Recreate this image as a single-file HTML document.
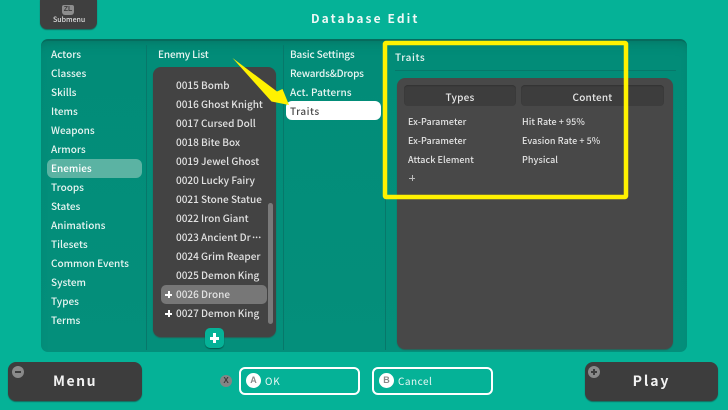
<!DOCTYPE html>
<html><head><meta charset="utf-8">
<style>
html,body{margin:0;padding:0}
body{width:728px;height:410px;overflow:hidden;position:relative;background:#05b297;font-family:"Liberation Sans","Noto Sans CJK JP",sans-serif;color:#fff}
*{box-sizing:border-box}
.a{position:absolute}
.t{position:absolute;font-family:"Noto Sans CJK JP","Liberation Sans",sans-serif;font-size:10px;line-height:14px;letter-spacing:0;white-space:nowrap;color:#e9f5f2;font-weight:500;filter:blur(.25px)}
.d{color:#e2e2e2}
.l{left:176px}
.s{font-size:9px;letter-spacing:.05px}
.dk{background:#434343;box-shadow:0 1px 1px #2c5e55}
.hd{position:absolute;top:85px;height:21px;background:#3d3d3d;border-radius:4px;box-shadow:inset 0 1px 1px #333;text-align:center;font-family:"Noto Sans CJK JP",sans-serif;font-size:10px;line-height:23px;letter-spacing:.2px;color:#e8e8e8;font-weight:500}
.btn{position:absolute;background:#3d3d3d;border-radius:8px;box-shadow:0 1px 1px #16695c;text-align:center;font-family:"Noto Sans CJK JP",sans-serif;font-weight:700;font-size:14px;letter-spacing:1.9px;line-height:38px;color:#f2f2f2}
.ob{position:absolute;top:367px;height:28px;border:2px solid #fff;border-radius:6px}
.c{position:absolute;border-radius:50%;text-align:center;font-family:"Liberation Sans",sans-serif;font-weight:700}
</style></head><body>

<!-- Submenu -->
<div class="a" style="left:40px;top:-6px;width:57px;height:35px;background:#3f3f3f;border-radius:7px;box-shadow:0 1px 1px #16695c"></div>
<div class="a" style="left:62px;top:5px;width:12px;height:10px;background:#8d8d8d;border-radius:2px 2px 3px 3px;font:700 7px/10px 'Liberation Sans',sans-serif;color:#3f3f3f;text-align:center">ZL</div>
<div class="t" style="left:53px;top:14px;font-size:7px;line-height:13px;letter-spacing:0;color:#ddd">Submenu</div>

<div class="t" style="left:311px;top:10px;font-size:12px;line-height:18px;letter-spacing:2.1px;font-weight:700;color:#eef8f6">Database Edit</div>

<!-- Main panel -->
<div class="a" style="left:41px;top:39px;width:646px;height:313px;border-radius:7px;background:linear-gradient(#028c78,#048f7b);border-top:2px solid #066b5d;box-shadow:inset 0 8px 12px -8px #06705f"></div>
<div class="a" style="left:146px;top:45px;width:1px;height:305px;background:#07786a"></div>
<div class="a" style="left:283px;top:45px;width:1px;height:305px;background:#07786a"></div>
<div class="a" style="left:385px;top:45px;width:1px;height:305px;background:#07786a"></div>
<div class="a" style="left:395px;top:70px;width:281px;height:1px;background:#07786a"></div>

<!-- Left column -->
<div class="a" style="left:47px;top:159px;width:95px;height:19px;border-radius:6px;background:#5bb3a3"></div>
<div class="t" style="left:51px;top:47px">Actors</div>
<div class="t" style="left:51px;top:66px">Classes</div>
<div class="t" style="left:51px;top:85px">Skills</div>
<div class="t" style="left:51px;top:104px">Items</div>
<div class="t" style="left:51px;top:123px">Weapons</div>
<div class="t" style="left:51px;top:142px">Armors</div>
<div class="t" style="left:51px;top:161px;color:#fff">Enemies</div>
<div class="t" style="left:51px;top:180px">Troops</div>
<div class="t" style="left:51px;top:199px">States</div>
<div class="t" style="left:51px;top:218px">Animations</div>
<div class="t" style="left:51px;top:237px">Tilesets</div>
<div class="t" style="left:51px;top:256px">Common Events</div>
<div class="t" style="left:51px;top:275px">System</div>
<div class="t" style="left:51px;top:294px">Types</div>
<div class="t" style="left:51px;top:313px">Terms</div>

<!-- Enemy list -->
<div class="t" style="left:158px;top:47px;letter-spacing:-.15px">Enemy List</div>
<div class="a dk" style="left:153px;top:67px;width:123px;height:270px;border-radius:8px"></div>
<div class="a" style="left:161px;top:285px;width:106px;height:19px;border-radius:5px;background:#777"></div>
<div class="a" style="left:268px;top:203px;width:5px;height:121px;border-radius:3px;background:#7a7a7a"></div>
<div class="t d l" style="top:78px">0015 Bomb</div>
<div class="t d l" style="top:97px">0016 Ghost Knight</div>
<div class="t d l" style="top:116px">0017 Cursed Doll</div>
<div class="t d l" style="top:135px">0018 Bite Box</div>
<div class="t d l" style="top:154px">0019 Jewel Ghost</div>
<div class="t d l" style="top:173px">0020 Lucky Fairy</div>
<div class="t d l" style="top:192px">0021 Stone Statue</div>
<div class="t d l" style="top:211px">0022 Iron Giant</div>
<div class="t d l" style="top:230px">0023 Ancient Dr<span style="letter-spacing:-2.7px">···</span></div>
<div class="t d l" style="top:249px">0024 Grim Reaper</div>
<div class="t d l" style="top:268px">0025 Demon King</div>
<div class="t d l" style="top:287px">0026 Drone</div>
<div class="t d l" style="top:306px">0027 Demon King</div>
<div class="a" style="left:165px;top:293.500px;width:7px;height:2px;background:#fff"></div>
<div class="a" style="left:167.500px;top:291px;width:2px;height:7px;background:#fff"></div>
<div class="a" style="left:165px;top:312.500px;width:7px;height:2px;background:#fff"></div>
<div class="a" style="left:167.500px;top:310px;width:2px;height:7px;background:#fff"></div>
<div class="a" style="left:205px;top:328px;width:19px;height:20px;border-radius:5px;background:#05b297;box-shadow:0 1px 1px #06584c"></div>
<div class="a" style="left:210px;top:336.500px;width:9px;height:3px;background:#fff"></div>
<div class="a" style="left:213px;top:333px;width:3px;height:10px;background:#fff"></div>

<!-- Third column -->
<div class="t" style="left:290px;top:47px;letter-spacing:-.14px">Basic Settings</div>
<div class="t" style="left:290px;top:66px;letter-spacing:-.2px">Rewards&amp;Drops</div>
<div class="t" style="left:290px;top:85px;letter-spacing:.1px">Act. Patterns</div>
<div class="a" style="left:286px;top:101px;width:95px;height:19px;border-radius:6px;background:#fff"></div>
<div class="t" style="left:290px;top:104px;color:#4a4a4a;letter-spacing:.5px">Traits</div>

<!-- Traits -->
<div class="t" style="left:395px;top:50px;letter-spacing:.6px">Traits</div>
<div class="a dk" style="left:397px;top:78px;width:276px;height:271px;border-radius:8px;background:#484848"></div>
<div class="hd" style="left:404px;width:112px">Types</div>
<div class="hd" style="left:521px;width:143px">Content</div>
<div class="t d s" style="left:408px;top:115px">Ex-Parameter</div>
<div class="t d s" style="left:408px;top:134px">Ex-Parameter</div>
<div class="t d s" style="left:408px;top:153px">Attack Element</div>
<div class="t d s" style="left:522px;top:115px">Hit Rate + 95%</div>
<div class="t d s" style="left:522px;top:134px">Evasion Rate + 5%</div>
<div class="t d s" style="left:522px;top:153px">Physical</div>
<div class="a" style="left:409px;top:177.500px;width:6px;height:1px;background:#bbb"></div>
<div class="a" style="left:411.500px;top:175px;width:1px;height:6px;background:#bbb"></div>

<!-- Bottom -->
<div class="btn" style="left:8px;top:362px;width:134px;height:39px;letter-spacing:1.5px">Menu</div>
<div class="c" style="left:12px;top:366px;width:12px;height:12px;background:#8a8a8a"></div>
<div class="a" style="left:15px;top:371px;width:6px;height:2px;background:#3d3d3d"></div>
<div class="btn" style="left:585px;top:362px;width:133px;height:39px">Play</div>
<div class="c" style="left:588px;top:366px;width:12px;height:12px;background:#8a8a8a"></div>
<div class="a" style="left:591px;top:371px;width:6px;height:2px;background:#3d3d3d"></div>
<div class="a" style="left:593px;top:369px;width:2px;height:6px;background:#3d3d3d"></div>
<div class="c" style="left:220px;top:375px;width:12px;height:12px;background:#858585;color:#3a3a3a;font-size:8px;line-height:12px">X</div>
<div class="ob" style="left:239px;width:121px"></div>
<div class="c" style="left:246px;top:373px;width:15px;height:15px;background:#fff;color:#8a8a8a;font-size:9px;line-height:15px">A</div>
<div class="t" style="left:265px;top:374px;letter-spacing:.8px;color:#eaf8f5;font-weight:400">OK</div>
<div class="ob" style="left:372px;width:121px"></div>
<div class="c" style="left:379px;top:373px;width:15px;height:15px;background:#fff;color:#8a8a8a;font-size:9px;line-height:15px">B</div>
<div class="t" style="left:398px;top:374px;letter-spacing:.5px;color:#eaf8f5;font-weight:400">Cancel</div>

<!-- Yellow annotations -->
<svg class="a" style="left:0;top:0" width="728" height="410" viewBox="0 0 728 410">
<polygon points="232.500,58 277,91.500 282.500,89 289,105 271.500,101.500" fill="#fff200"/>
<rect x="385" y="43" width="241" height="154" fill="none" stroke="#fff200" stroke-width="4.500" rx="1"/>
</svg>
</body></html>
